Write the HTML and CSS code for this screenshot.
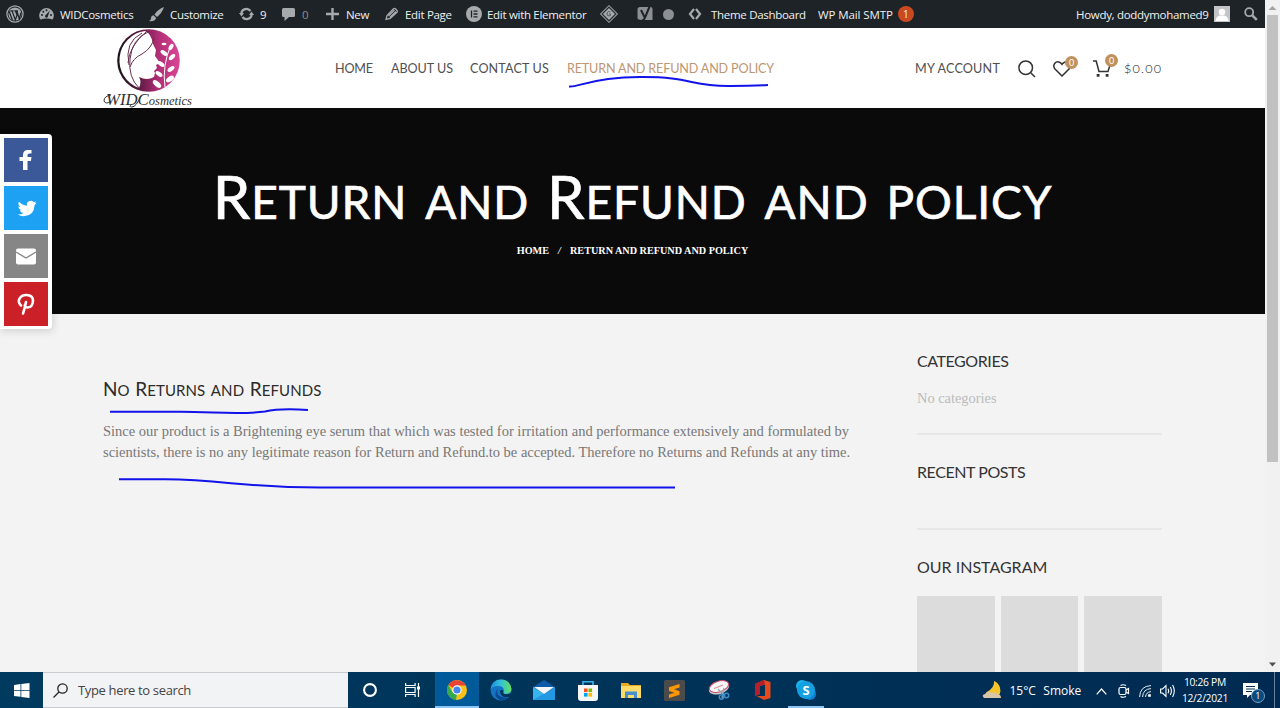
FILE: index.html
```
<!DOCTYPE html>
<html lang="en"><head><meta charset="utf-8"><title>Return and Refund and policy</title><link rel="stylesheet" href="styles.css"></head>
<body>
<div class="page">
<div class="view">
<div class="adminbar">
 <div class="item"><svg width="18" height="18" viewBox="0 0 20 20"><circle cx="10" cy="10" r="9" fill="none" stroke="#a7aaad" stroke-width="1.4"/><circle cx="10" cy="10" r="7.3" fill="#a7aaad"/><path d="M3.5 7l3.600 10M4.800 6.500h3.600M6.800 6.500l3.500 10 2-5.500-1.900-4.500M9.300 6.500h4M12 6.500l2.800 9 1.900-7" fill="none" stroke="#1d2327" stroke-width="1.400"/></svg></div>
 <div class="item g6"><svg width="15" height="14" viewBox="0 0 15 14"><path d="M1.500 12.500A7.300 7.300 0 1 1 13.500 12.500Q7.500 10.500 1.500 12.500Z" fill="#a7aaad"/><g fill="#1d2327"><circle cx="3" cy="8" r="1"/><circle cx="4.300" cy="4.700" r="1"/><circle cx="7.500" cy="3.200" r="1"/><circle cx="12" cy="8" r="1"/><path d="M10.800 3.500L9 9a1.500 1.500 0 1 1-2-1.200z"/></g></svg><span>WIDCosmetics</span></div>
 <div class="item g6"><svg width="15" height="15" viewBox="0 0 15 15" fill="#a7aaad"><path d="M15 0Q9 2 5.500 7.500L8 10Q13 6 15 0ZM4.500 8.200Q2 8.500 2 11T0 14Q5.500 15 7.200 10.900Z"/></svg><span>Customize</span></div>
 <div class="item g6"><svg width="15" height="14" viewBox="0 0 15 14"><path d="M2.300 6A5.200 5.200 0 0 1 11.500 4M12.700 8A5.200 5.200 0 0 1 3.500 10" fill="none" stroke="#a7aaad" stroke-width="2.200"/><path d="M0 6h5L2.500 9.500ZM10 8h5L12.500 4.500Z" fill="#a7aaad"/></svg><span>9</span></div>
 <div class="item g7 dim"><svg width="13" height="13" viewBox="0 0 13 13"><path d="M1.500 0h10Q13 0 13 1.500v6Q13 9 11.500 9H7l-4.500 4V9h-1Q0 9 0 7.500v-6Q0 0 1.500 0Z" fill="#a7aaad"/></svg><span>0</span></div>
 <div class="item g7"><svg width="13" height="12" viewBox="0 0 13 12"><path d="M6.500 0v12M0 6h13" stroke="#a7aaad" stroke-width="2.400"/></svg><span>New</span></div>
 <div class="item g7"><svg width="13" height="14" viewBox="0 0 13 14"><path d="M1 12.500L2 8.500 8.500 1.800Q9.500 1 10.700 2L12 3.500Q12.700 4.500 12 5.300L5.300 11.500ZM3.500 9L9.500 3M4.800 10.500L11 4.500" fill="none" stroke="#a7aaad" stroke-width="1.300"/></svg><span>Edit Page</span></div>
 <div class="item g5"><svg width="16" height="16" viewBox="0 0 16 16"><circle cx="8" cy="8" r="8" fill="#a7aaad"/><path d="M5.500 4.500v7M7.500 5.200h4M7.500 8h4M7.500 10.800h4" stroke="#1d2327" stroke-width="1.300"/></svg><span>Edit with Elementor</span></div>
 <div class="item"><svg width="18" height="18" viewBox="0 0 18 18"><path d="M9 .7L17.300 9 9 17.300.7 9Z" fill="none" stroke="#8c8f94" stroke-width="1.200"/><path d="M9 3L15 9 9 15 3 9Z" fill="#a7aaad"/><path d="M10.500 7Q8 5.500 7 8t2 3q2 0 1.500-2H9" fill="none" stroke="#50575e"/></svg></div>
 <div class="item"><svg width="16" height="18" viewBox="0 0 16 18"><path d="M3 2h9.500L14 1v1q1.500.5 1.500 2v11H6q-5.500 0-5.500-2V4.500Q.5 2 3 2Z" fill="#8c8f94"/><path d="M4 5l3.500 7M13 .5L8 12.500Q7 15.500 4 16" fill="none" stroke="#1d2327" stroke-width="2"/></svg></div>
 <div class="item"><span class="dot"></span></div>
 <div class="item g9"><svg width="14" height="12" viewBox="0 0 14 12"><path d="M6 1L2 6l4 5M8 1l4 5-4 5" fill="none" stroke="#a7aaad" stroke-width="2.200"/></svg><span>Theme Dashboard</span></div>
 <div class="item mail"><span>WP Mail SMTP</span><b class="alert">1</b></div>
 <div class="item g5"><span>Howdy, doddymohamed9</span><svg width="16" height="16" viewBox="0 0 16 16"><path d="M0 0h16v16H0Z" fill="#c3c4c7"/><circle cx="8" cy="6" r="3.300" fill="#fff"/><path d="M1.500 15Q2 10 6 9.500h4Q14 10 14.500 15Z" fill="#fff"/></svg></div>
 <div class="item"><svg width="14" height="14" viewBox="0 0 14 14" fill="none" stroke="#a7aaad"><circle cx="5.200" cy="5.200" r="4" stroke-width="1.800"/><path d="M8.300 8.300L12.800 12.800" stroke-width="2.600"/></svg></div>
</div>
<header class="header">
 <div class="logo"><svg width="92" height="80" viewBox="0 0 92 80"><defs><linearGradient id="lg"><stop offset="0" stop-color="#171318"/><stop offset=".35" stop-color="#5d1a43"/><stop offset=".65" stop-color="#b02d75"/><stop offset="1" stop-color="#dc4697"/></linearGradient></defs><circle cx="45.500" cy="32.500" r="31.300" fill="url(#lg)"/><path d="M42 3A29.500 29.500 0 0 0 36 60Q39 54 36 49Q44 53 51 49L52 45 51 43 54 40 53 37 57 35 52 28 53 22 50 16Q48 5 42 3Z" fill="#fff"/><path d="M45 4Q29 11 27 31Q25 49 36 60M27 39Q30 30 39 26Q49 20 51 10M25 35Q26 18 44 3M39 5Q21 14 26 37" fill="none" stroke="#683050"/><path d="M62 59Q59 37 68 17" fill="none" stroke="#fff"/><g fill="#fff"><ellipse cx="61" cy="16" rx="2.500" ry="1.300"/><ellipse cx="68" cy="19" rx="2" ry="3.500" transform="rotate(30 68 19)"/><ellipse cx="61" cy="25" rx="4" ry="2" transform="rotate(35 61 25)"/><ellipse cx="69" cy="29" rx="4" ry="2" transform="rotate(-45 69 29)"/><ellipse cx="58" cy="36" rx="4" ry="2" transform="rotate(35 58 36)"/><ellipse cx="68" cy="41" rx="4" ry="2" transform="rotate(-35 68 41)"/><ellipse cx="56" cy="46" rx="4" ry="2" transform="rotate(35 56 46)"/><ellipse cx="67" cy="51" rx="4.500" ry="2.500" transform="rotate(-35 67 51)"/><ellipse cx="54" cy="56" rx="5" ry="2.500" transform="rotate(40 54 56)"/></g><text x="3" y="76.500" class="script" textLength="86" lengthAdjust="spacingAndGlyphs"><tspan class="big">WIDC</tspan>osmetics</text><path d="M8 67Q1 68 1 73Q3 77 8 73M29 76Q25 79 29 79T38 68" fill="none" stroke="#333"/></svg></div>
 <nav class="nav"><a class="n1">HOME</a><a class="n2">ABOUT US</a><a class="n3">CONTACT US</a><a class="active">RETURN AND REFUND AND POLICY</a></nav>
 <div class="tools"><a class="acct">MY ACCOUNT</a>
 <svg width="18" height="18" viewBox="0 0 18 18" fill="none" stroke="#333" stroke-width="1.500"><circle cx="7.700" cy="7.700" r="6.800"/><path d="M12.700 12.700L17 17"/></svg>
 <span class="icon heart"><svg width="18" height="16" viewBox="0 0 18 16" fill="none" stroke="#333" stroke-width="1.500"><path d="M9 15L2 8Q-.3 5 1.700 2.500T6.500 1.200Q8 1.700 9 3.300Q10 1.700 11.500 1.200Q14.500.5 16.300 2.500T16 8Z"/></svg><b>0</b></span>
 <span class="icon cart"><svg width="18" height="17" viewBox="0 0 18 17" fill="none" stroke="#333" stroke-width="1.500"><path d="M0 1h3.200L6 11.500h9L17 5"/><path d="M3.700 15.300h2.800M12.700 15.300h2.800" stroke-width="2.800"/></svg><b>0</b></span>
 <a class="price">$0.00</a></div>
</header>
<section class="hero"><h1><span class="word">Return</span> and <span class="word">Refund</span> and policy</h1>
<div class="crumbs"><span>HOME</span><i>/</i><span>RETURN AND REFUND AND POLICY</span></div></section>
<main class="main">
 <article class="article"><h3><span class="word">No</span> <span class="word">Returns</span> and <span class="word">Refunds</span></h3>
 <p>Since our product is a Brightening eye serum that which was tested for irritation and performance extensively and formulated by<br><span class="l2">scientists, there is no any legitimate reason for Return and Refund.to be accepted. Therefore no Returns and Refunds at any time.</span></p></article>
 <aside class="side">
 <section class="widget cats"><h5>CATEGORIES</h5><p>No categories</p></section>
 <section class="widget recent"><h5>RECENT POSTS</h5></section>
 <section class="widget"><h5 class="wide">OUR INSTAGRAM</h5><div class="insta"><i></i><i></i><i></i></div></section>
 </aside>
</main>
</div>
<div class="scroll"><svg width="15" height="15"><path d="M3.500 10h8L7.500 6Z" fill="#a3a3a3"/></svg><div class="thumb"></div><svg class="down" width="15" height="15"><path d="M4 5.500h7L7.500 9.500Z" fill="#505050"/></svg></div>
</div>
<div class="share">
 <a class="fb"><svg width="44" height="44" viewBox="0 0 44 44"><path d="M19 32V23H15.500v-4H19v-2q0-5 5-5h3.500v3.500h-2Q23.500 15.500 23.500 17v2h4l-.6 4H23.500v9Z" fill="#fff"/></svg></a>
 <a class="tw"><svg width="44" height="44" viewBox="0 0 44 44"><path d="M32.500 16.800q-1 .4-2 .5 1.200-.8 1.600-2-1.200.7-2.400.9a3.900 3.900 0 0 0-6.700 3.500q-4.900-.2-8-4.100-1.700 3 1.200 5.200-1 0-1.800-.5 0 2.900 3.100 3.900-.9.2-1.800 0 .9 2.600 3.700 2.700-2.500 1.900-5.700 1.600 2.900 1.800 6.200 1.700 10.300-.6 10.700-11.300 1.100-.8 1.900-2.100Z" fill="#fff"/></svg></a>
 <a class="em"><svg width="44" height="44" viewBox="0 0 44 44"><rect x="12" y="14.500" width="20" height="16" rx="2" fill="#fff"/><path d="M12 18l10 6 10-6" fill="none" stroke="#868686" stroke-width="1.400"/></svg></a>
 <a class="pin"><svg width="44" height="44" viewBox="0 0 44 44"><path d="M19 31.500q1.500-4 3-11.500M17 23.500q-3.500-3-1.500-6.800t7-3.700q6.700.3 6.500 6-.5 6.300-5.300 6.500-2.400 0-3-2" fill="none" stroke="#fff" stroke-width="2.600" stroke-linecap="round"/></svg></a>
</div>
<svg class="ink" width="1280" height="672" fill="none"><path d="M569 86.500C578 88 588 77.500 640 77S690 86.500 730 86Q750 86 768 85"/><path d="M110 411.800H180C215 411.800 240 415 265 411.500Q280 408 308 410"/><path d="M119 479.300H165C225 480 245 487.500 320 487.500H675"/></svg>
<div class="taskbar">
 <div class="start"><svg width="16" height="15" viewBox="0 0 16 15" fill="#fff"><path d="M0 2l6.500-1v6H0ZM7.300.9L15.500 0v7H7.300ZM0 7.800h6.500v6L0 13ZM7.300 7.800h8.200V15L7.300 14Z"/></svg></div>
 <div class="search"><svg width="15" height="15" viewBox="0 0 15 15" fill="none" stroke="#222" stroke-width="1.300"><circle cx="9.500" cy="5.500" r="4.700"/><path d="M6 9L.5 14.500"/></svg><span>Type here to search</span></div>
 <div class="apps">
  <div><svg width="14" height="14"><circle cx="7" cy="7" r="5.900" fill="none" stroke="#fff" stroke-width="2.100"/></svg></div>
  <div><svg width="16" height="14" viewBox="0 0 16 14" fill="none" stroke="#fff" stroke-width="1.200"><path d="M.6 0v2.500h9.500V0M.6 14v-2.500h9.500V14M.6 4.500h9.500v5H.6ZM13.500 0v14"/><path d="M12 5h3" stroke-width="3"/></svg></div>
  <div class="on"><svg width="20" height="20" viewBox="0 0 20 20"><circle cx="10" cy="10" r="10" fill="#fbc116"/><path d="M10 10L1.300 5A10 10 0 0 1 18.700 5.500H10Z" fill="#ea4335"/><path d="M1.300 5L6 13 10 14 9 20A10 10 0 0 1 1.300 5Z" fill="#34a853"/><circle cx="10" cy="10" r="4.700" fill="#fff"/><circle cx="10" cy="10" r="3.600" fill="#4285f4"/></svg></div>
  <div><svg width="22" height="22" viewBox="0 0 22 22"><defs><linearGradient id="e" x1="0" x2="1"><stop stop-color="#1a8fe0"/><stop offset=".5" stop-color="#35c1d6"/><stop offset="1" stop-color="#66e05a"/></linearGradient></defs><circle cx="11" cy="11" r="10.500" fill="#1673c4"/><path d="M.6 10Q2 .5 11 .5T21.500 10q-.5 5-6 5-3.500-.5-1.500-3Q14 7 8 7 3 7 .6 10Z" fill="url(#e)"/><path d="M8 9.500Q5 16 12 18t8-2Q16 22 10 21 2 17 8 9.500Z" fill="#0c4a92"/><path d="M13.500 12Q12 15 16 15.200T22 13v4l-2 .5Q11 20 10 12.500Q10.500 10 13.500 12Z" fill="#003459"/></svg></div>
  <div><svg width="22" height="20" viewBox="0 0 22 20"><path d="M0 7L11 0 22 7v7H0Z" fill="#0f5ba8"/><path d="M0 7v13h22V7l-11 7Z" fill="#38b4ee"/><path d="M0 20L22 7v13Z" fill="#1687dc" opacity=".6"/><path d="M1 7h20l-10 7Z" fill="#f4f7fa"/></svg></div>
  <div><svg width="20" height="21" viewBox="0 0 20 21"><path d="M5 6V1.700h10V6" fill="none" stroke="#35b3e8" stroke-width="1.600"/><path d="M0 5h20v13q0 3-3 3H3q-3 0-3-3Z" fill="#f6f6f6"/><path d="M6 8.500h3.600v3.600H6Z" fill="#f25022"/><path d="M10.500 8.500h3.600v3.600h-3.600Z" fill="#7fba00"/><path d="M6 13h3.600v3.600H6Z" fill="#00a4ef"/><path d="M10.500 13h3.600v3.600h-3.600Z" fill="#ffb900"/></svg></div>
  <div><svg width="20" height="17" viewBox="0 0 20 17"><path d="M0 1h7l2 2h11v13H0Z" fill="#e8a820"/><path d="M0 4h20v12H0Z" fill="#fcdb68"/><path d="M4 16V9.500h12V16h-3v-3H7v3Z" fill="#4690cf"/></svg></div>
  <div><svg width="21" height="21" viewBox="0 0 21 21"><rect width="21" height="21" rx="1.500" fill="#4b4b4b"/><path d="M15.500 4v3.500L10 9.300l5.500 1.900v3.500L5 18v-3.500l5.500-1.700L5 11V7.300Z" fill="#ff9800"/></svg></div>
  <div><svg width="22" height="20" viewBox="0 0 22 20"><ellipse cx="11" cy="8" rx="10.500" ry="6" transform="rotate(-18 11 8)" fill="#c9ccd2"/><ellipse cx="11" cy="6.500" rx="10" ry="5.300" transform="rotate(-18 11 6.500)" fill="#f7f7f7" stroke="#ca4960"/><path d="M6 8.500l9-3.500" stroke="#d9909a" stroke-width="1.200"/><path d="M10 9l7 7M16 8l-2 10" stroke="#9aa6b2" stroke-width="1.300"/><g fill="none" stroke="#3b8cc9" stroke-width="1.500"><circle cx="18.500" cy="15.500" r="2.200"/><circle cx="13.500" cy="17" r="2.200"/></g></svg></div>
  <div><svg width="17" height="20" viewBox="0 0 17 20"><path d="M10 0L1 4v12l5-2V6l5-1.500V16L2.500 16 10 20l6.500-2V2Z" fill="#e34a1c"/><path d="M10 0L1 4v12l5-2V6l5-1.500Z" fill="#b5202c"/></svg></div>
  <div class="run"><svg width="20" height="20" viewBox="0 0 20 20"><circle cx="6" cy="6" r="6" fill="#1cb4ef"/><circle cx="14" cy="14" r="6" fill="#0c80d2"/><circle cx="10" cy="10" r="9" fill="#14a0e0"/><text x="10" y="15" class="sk" text-anchor="middle">S</text></svg></div>
 </div>
 <div class="weather"><svg width="20" height="18" viewBox="0 0 20 18"><path d="M12 0Q13 7 4 11.500q3 4 9.500 3.500T18 7Q16.500 1.500 12 0Z" fill="#f5c52a"/><path d="M2 17q-3-3 1-4 3-4 7-1 4-2 5 1 4 0 4 4Z" fill="#d9c5a8"/></svg><span>15°C</span><span>Smoke</span></div>
 <div class="tray">
  <svg width="11" height="7" viewBox="0 0 11 7"><path d="M.7 6.300L5.500 1l4.800 5.300" fill="none" stroke="#fff" stroke-width="1.200"/></svg>
  <svg width="12" height="14" viewBox="0 0 12 14" fill="none" stroke="#fff" stroke-width="1.200"><rect x="1" y="3.500" width="7" height="7" rx="1.500"/><path d="M8 6l2.500-1.500v5L8 8M2.500 1.500Q5 0 8 1.500M2.500 12.500Q5 14 8 12.500"/></svg>
  <svg width="12" height="12" viewBox="0 0 12 12" fill="none" stroke="#e4eaf0"><path d="M.6 12Q1 1 12 .6M3.600 12Q4 4 12 3.600M6.500 12Q7 7 12 6.600"/><circle cx="10.500" cy="10.500" r="1.200" fill="#fff"/></svg>
  <svg width="16" height="14" viewBox="0 0 16 14" fill="none" stroke="#fff" stroke-width="1.100"><path d="M.6 5h2L6 1.500v11L2.600 9h-2ZM8 4.700Q9.300 7 8 9.300M10.300 3Q12.500 7 10.300 11M12.600 1Q16 7 12.600 13"/></svg>
 </div>
 <div class="clock"><span>10:26 PM</span><span>12/2/2021</span></div>
 <div class="notice"><svg width="16" height="15" viewBox="0 0 16 15"><path d="M0 0h15v12H7l-3 3v-3H0Z" fill="#fff"/><path d="M3 3.500h9M3 6h9M3 8.500h6" stroke="#003057"/></svg><b>1</b></div>
</div>
</body></html>
```
FILE: styles.css
```
*{box-sizing:border-box}
body{margin:0;width:1280px;height:708px;overflow:hidden;position:relative;font-family:"Open Sans","Noto Sans",sans-serif}
svg{display:block;flex:none}
.page{display:flex;height:672px;overflow:hidden}
.view{width:1265px;background:#f3f3f3}

/* admin bar */
.adminbar{height:28px;background:#1d2327;color:#f0f0f1;padding-left:6px;display:grid;grid-template-columns:33px 110px 90px 43px 44px 59px 81px 134px 37px 26px 25px 130px 258px 168px auto;font-size:11.5px;letter-spacing:-.3px;white-space:nowrap}
.item{display:flex;align-items:center}
.g5{gap:5px}
.g6{gap:6px}
.g7{gap:7px}
.g9{gap:9px}
.mail{letter-spacing:-.1px;gap:5px}
.dim span{color:#8c8f94}
.dot{width:11px;height:11px;border-radius:50%;background:#8c8f94}
.alert{width:16px;height:16px;border-radius:50%;background:#ca4a1f;font-weight:400;font-size:10px;line-height:16px;text-align:center}

/* header */
.header{height:80px;background:#fff;display:grid;grid-template-columns:232px 580px auto;padding-left:103px;font:12.6px Lato,sans-serif;color:#505050}
.script{font:italic 12px "Liberation Serif",serif;fill:#333}
.big{font-size:16px}
.nav,.tools{display:flex;align-items:center;white-space:nowrap;padding-top:1px}
.nav{gap:18px}
.n1{width:38px;letter-spacing:-.2px}
.n2{width:61px;letter-spacing:-.05px}
.n3{width:79px;letter-spacing:.14px}
.active{color:#bd9672;letter-spacing:-.16px}
.acct{width:85px;letter-spacing:.2px;margin-right:18px}
.icon{position:relative;margin-left:17px}
.cart{margin-left:22px}
.icon b{position:absolute;left:12px;top:-6px;width:13px;height:13px;border-radius:50%;background:#c0915c;color:#fff;font:9px/13px Lato,sans-serif;text-align:center}
.heart b{top:-5px}
.price{margin-left:13px;letter-spacing:1.2px;font-weight:300;color:#222}

/* hero */
.hero{height:206px;background:#0a0a0a;color:#fff;text-align:center;padding-top:48px}
h1{margin:0;font:400 66px/76px Lato,sans-serif;font-variant:small-caps;white-space:nowrap;letter-spacing:.93px;-webkit-text-stroke:.7px #fff}
.word{display:inline-block}
h1 .word::first-letter{font-size:60px}
.crumbs{display:flex;justify-content:center;gap:8px;font:bold 10.2px/14px "Liberation Serif",serif;margin-top:10px}
.crumbs i{width:5px}

/* content */
.main{display:flex;padding-left:103px}
.article{width:814px;padding-top:60px}
h3{margin:0;font:400 21px/28px Lato,sans-serif;font-variant:small-caps;letter-spacing:.1px;color:#2d2a2a}
h3 .word::first-letter{font-size:19px}
.article p{margin:18px 0 0;font:14.5px/20.5px "Liberation Serif",serif;color:#777;white-space:nowrap}
.l2{letter-spacing:-.012px}
.side{width:245px;padding-top:34px}
.widget{margin-bottom:24px}
.cats,.recent{border-bottom:2px solid #e7e7e7}
.cats{height:87px}
.recent{height:71px}
h5{margin:0;font:400 16px/26px Lato,sans-serif;letter-spacing:-.43px;color:#333}
h5.wide{letter-spacing:0}
.side p{margin:14px 0 0;font:14.4px/20px "Liberation Serif",serif;color:#bbb}
.insta{display:grid;grid-template-columns:repeat(3,1fr);gap:6px;margin-top:16px}
.insta i{height:80px;background:#dcdcdc}

.scroll{width:15px;background:#f1f1f1;display:flex;flex-direction:column;align-items:center}
.thumb{width:11px;height:447px;background:#c1c1c1}
.down{margin-top:auto}

/* floating share panel */
.share{position:absolute;left:0;top:134px;width:52px;height:195px;padding:4px;display:flex;flex-direction:column;gap:4px;background:#fff;border-radius:0 4px 4px 0;box-shadow:1px 2px 8px rgba(0,0,0,.15)}
.share a{width:44px;height:44px}
.fb{background:#3b5998}
.tw{background:#1da1f2}
.em{background:#868686}
.pin{background:#cb2027}

.ink{position:absolute;left:0;top:0;pointer-events:none;stroke:#1212ea;stroke-width:2}

/* taskbar */
.taskbar{display:flex;height:36px;background:linear-gradient(90deg,#003a5f,#003358 50%,#002a52);color:#fff;white-space:nowrap}
.start{width:43px;display:flex;align-items:center;justify-content:center}
.search{width:305px;background:#f2f3f5;border:1px solid #c8ccd0;border-width:1px 0;display:flex;align-items:center;gap:10px;padding-left:10px;color:#444;font-size:13px;letter-spacing:-.35px}
.apps{display:flex}
.apps div{width:43.6px;display:flex;align-items:center;justify-content:center;border-bottom:2px solid transparent;padding-top:2px}
.apps .on{background:#005999;border-color:#8bc5f3}
.apps .run{border-color:#8bc5f3;width:36px;margin-left:4px}
.sk{font:bold 13px "Open Sans",sans-serif;fill:#fff}
.weather{margin-left:158px;width:114px;display:flex;align-items:center;gap:7.5px;font-size:12px}
.tray{display:flex;align-items:center;gap:9px;width:86px;padding-top:2px}
.tray svg:first-child{margin-right:2px}
.clock{width:46px;display:flex;flex-direction:column;align-items:center;font-size:10.3px;line-height:16px;letter-spacing:-.3px;padding-top:2px}
.notice{position:relative;width:47px;border-right:1px solid #6a8098;margin-right:4px;padding:11px 0 0 15px}
.notice b{position:absolute;left:23px;top:17px;width:14px;height:14px;border:1px solid #6f9fc6;border-radius:50%;background:#0c4a7c;font:9px/12px "Open Sans",sans-serif;text-align:center}
```
